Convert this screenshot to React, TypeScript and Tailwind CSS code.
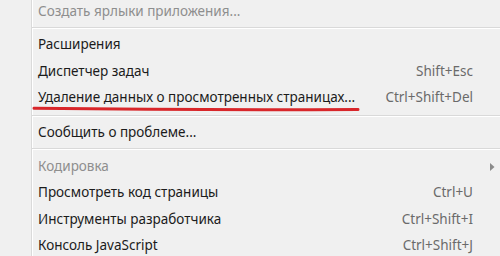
import React from "react";

type Item = { label: string; shortcut?: string; disabled?: boolean; arrow?: boolean; mark?: boolean };

function Row({ item }: { item: Item }) {
  return (
    <div className="relative flex h-[26.5px] items-center whitespace-nowrap pl-[38px] pr-[27px]">
      <span className={item.disabled ? "text-[#8e8e8e]" : "text-[#1b1b1b]"}>{item.label}</span>
      <span className="ml-auto text-[#6a6a6a]">{item.shortcut}</span>
      {item.arrow && (
        <svg className="absolute right-[5px] top-[10px]" width="5" height="8" viewBox="0 0 5 8">
          <path d="M0 0 L4.5 4 L0 8 Z" fill="#8a8a8a" />
        </svg>
      )}
      {item.mark && (
        <svg className="absolute left-[32px] top-[21px]" width="330" height="8" viewBox="0 0 330 8">
          <path d="M2 3.2 Q 160 5.2 326 4.4" stroke="#d8262a" strokeWidth="3" strokeLinecap="round" fill="none" />
        </svg>
      )}
    </div>
  );
}

function Sep() {
  return (
    <div className="flex h-[7px] flex-col justify-center pl-[32px]">
      <div className="h-px bg-[#d9d9d9]" />
      <div className="h-px bg-white" />
    </div>
  );
}

export default function App() {
  return (
    <div
      className="relative h-[256px] w-[500px] overflow-hidden bg-[#f0f0f0] text-[13.5px]"
      style={{ fontFamily: '"Noto Sans", "Open Sans", sans-serif' }}
    >
      <div className="absolute left-[31px] top-0 h-full w-px bg-[#dadada]" />
      <div className="absolute left-[32px] top-0 h-full w-px bg-white" />
      <div className="relative -mt-[2.25px] flex flex-col">
        <Row item={{ label: "Создать ярлыки приложения...", disabled: true }} />
        <Sep />
        <Row item={{ label: "Расширения" }} />
        <Row item={{ label: "Диспетчер задач", shortcut: "Shift+Esc" }} />
        <Row item={{ label: "Удаление данных о просмотренных страницах...", shortcut: "Ctrl+Shift+Del", mark: true }} />
        <div className="h-[1.5px]" />
        <Sep />
        <Row item={{ label: "Сообщить о проблеме..." }} />
        <Sep />
        <Row item={{ label: "Кодировка", disabled: true, arrow: true }} />
        <Row item={{ label: "Просмотреть код страницы", shortcut: "Ctrl+U" }} />
        <Row item={{ label: "Инструменты разработчика", shortcut: "Ctrl+Shift+I" }} />
        <Row item={{ label: "Консоль JavaScript", shortcut: "Ctrl+Shift+J" }} />
      </div>
    </div>
  );
}
